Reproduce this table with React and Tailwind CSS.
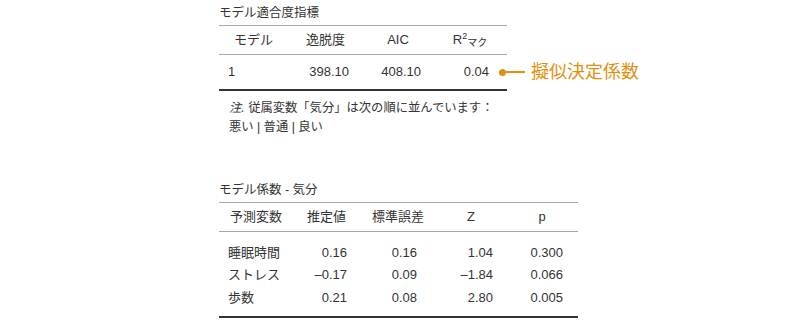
const fitCols = 'grid grid-cols-[69px_75px_70px_74px]';
const coefCols = 'grid grid-cols-[74px_67px_76px_70px_72px]';

const coefRows = [
  ['睡眠時間', '0.16', '0.16', '1.04', '0.300'],
  ['ストレス', '–0.17', '0.09', '–1.84', '0.066'],
  ['歩数', '0.21', '0.08', '2.80', '0.005'],
];

function FitTable() {
  return (
    <div className="w-[288px]">
      <div className="pt-[4px] text-[12.5px] leading-[18px]">モデル適合度指標</div>
      <div className="mt-[3px] border-t border-[#a8a8a8]">
        <div className={`${fitCols} h-[28px] items-center text-center text-[13px]`}>
          <div>モデル</div>
          <div>逸脱度</div>
          <div>AIC</div>
          <div className="relative">
            R<span className="relative -top-[5px] text-[9px]">2</span>
            <span className="relative top-[2px] text-[10px]">マク</span>
          </div>
        </div>
        <div className="relative border-t border-[#a8a8a8]">
          <div className={`${fitCols} h-[34px] items-center text-[13px]`}>
            <div className="pl-[9px]">1</div>
            <div className="text-right pr-[14px]">398.10</div>
            <div className="text-right pr-[12px]">408.10</div>
            <div className="text-right pr-[18px]">0.04</div>
          </div>
          <div className="absolute left-[280px] top-[17px] -translate-y-1/2 flex items-center">
            <div className="w-[7px] h-[7px] rounded-full bg-[#e0900f]" />
            <div className="w-[19px] h-[1.5px] bg-[#e0900f]" />
            <div className="ml-[6px] text-[18px] leading-[22px] text-[#e0900f] whitespace-nowrap">擬似決定係数</div>
          </div>
        </div>
        <div className="border-t-2 border-[#333]" />
      </div>
      <div className="mt-[8px] pl-[10px] text-[12.3px] leading-[19px]">
        <div className="whitespace-nowrap">
          <span className="italic">注.</span> 従属変数「気分」は次の順に並んでいます：
        </div>
        <div>悪い | 普通 | 良い</div>
      </div>
    </div>
  );
}

function CoefTable() {
  const pads = ['pl-[9px] text-left', 'pr-[13px] text-right', 'pr-[19px] text-right', 'pr-[13px] text-right', 'pr-[15px] text-right'];
  return (
    <div className="w-[359px] mt-[44px]">
      <div className="text-[12.5px] leading-[18px]">モデル係数 - 気分</div>
      <div className="mt-[3px] border-t border-[#a8a8a8]">
        <div className={`${coefCols} h-[28px] items-center text-center text-[13px]`}>
          <div>予測変数</div>
          <div>推定値</div>
          <div>標準誤差</div>
          <div>Z</div>
          <div>p</div>
        </div>
        <div className="border-t border-[#a8a8a8] pt-[9px] pb-[7px]">
          {coefRows.map((row) => (
            <div key={row[0]} className={`${coefCols} h-[22.5px] items-center text-[13px]`}>
              {row.map((cell, i) => (
                <div key={i} className={pads[i]}>{cell}</div>
              ))}
            </div>
          ))}
        </div>
        <div className="border-t-2 border-[#333]" />
      </div>
    </div>
  );
}

export default function App() {
  return (
    <div className="w-[800px] h-[326px] bg-white overflow-hidden pl-[219px] text-[#333] font-['Liberation_Sans','Noto_Sans_CJK_JP',sans-serif]">
      <FitTable />
      <CoefTable />
    </div>
  );
}
